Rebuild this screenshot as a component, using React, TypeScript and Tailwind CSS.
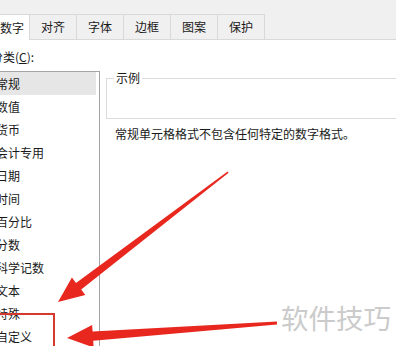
const TABS = ["对齐", "字体", "边框", "图案", "保护"];

const CATEGORIES = [
  "常规",
  "数值",
  "货币",
  "会计专用",
  "日期",
  "时间",
  "百分比",
  "分数",
  "科学记数",
  "文本",
  "特殊",
  "自定义",
];

const FONT = { fontFamily: '"Noto Sans CJK SC", "Noto Sans", sans-serif' };

export default function App() {
  return (
    <div
      className="relative h-[346px] w-[396px] overflow-hidden bg-white text-[12px] leading-[16px] text-[#1a1a1a]"
      style={FONT}
    >
      {/* tab strip */}
      <div className="flex h-[40px] items-end border-b border-[#d9d9d9] bg-[#f0f0f0]">
        <div className="-mb-px flex h-[26px] w-[30px] items-center justify-end border-r border-t border-[#d9d9d9] bg-white pr-[5px]">
          <span className="whitespace-nowrap">数字</span>
        </div>
        {TABS.map((t) => (
          <div
            key={t}
            className="flex h-[25px] w-[47px] items-center justify-center border-r border-t border-[#d9d9d9] bg-[#f0f0f0]"
          >
            {t}
          </div>
        ))}
      </div>

      <div className="flex">
        {/* category list */}
        <div className="w-[100px] shrink-0">
          <div className="ml-[-9px] mt-[9px] whitespace-nowrap">
            分类(<span className="underline">C</span>):
          </div>
          <ul className="ml-[-10px] mt-[6px] h-[300px] w-[110px] border border-[#a5a5a5] pt-0">
            {CATEGORIES.map((c, i) => (
              <li
                key={c}
                className={`mr-[3px] flex h-[23px] items-center whitespace-nowrap pl-[5px] ${
                  i === 0 ? "bg-[#e6e6e6]" : ""
                }`}
              >
                {c}
              </li>
            ))}
          </ul>
        </div>

        {/* sample + description */}
        <div className="flex-1 pl-[6px] pt-[38px]">
          <div className="relative h-[41px] w-[320px] border border-[#dcdcdc]">
            <span className="absolute left-[7px] top-[-9px] bg-white px-[2px]">
              示例
            </span>
          </div>
          <p className="mt-[7px] whitespace-nowrap pl-[9px]">
            常规单元格格式不包含任何特定的数字格式。
          </p>
        </div>
      </div>

      {/* watermark */}
      <div className="pointer-events-none absolute left-[281px] top-[300px] whitespace-nowrap text-[27.5px] leading-[34px] text-[#cbcbcb]">
        软件技巧
      </div>

      {/* annotations */}
      <svg
        className="pointer-events-none absolute left-0 top-0"
        width="396"
        height="346"
        viewBox="0 0 396 346"
      >
        <path
          d="M-4 314 H54 V350"
          fill="none"
          stroke="#d8392e"
          strokeWidth="2"
        />
        <polygon
          points="228.6,172.7 81.2,289.4 85.3,294.9 58,302 71.9,277.5 76,283 227.6,171.4"
          fill="#e8281f"
        />
        <polygon
          points="277.1,324.6 93.2,340.8 93.7,347.5 67,338 92.1,325.1 92.6,331.4 276.9,321.4"
          fill="#e8281f"
        />
      </svg>
    </div>
  );
}
